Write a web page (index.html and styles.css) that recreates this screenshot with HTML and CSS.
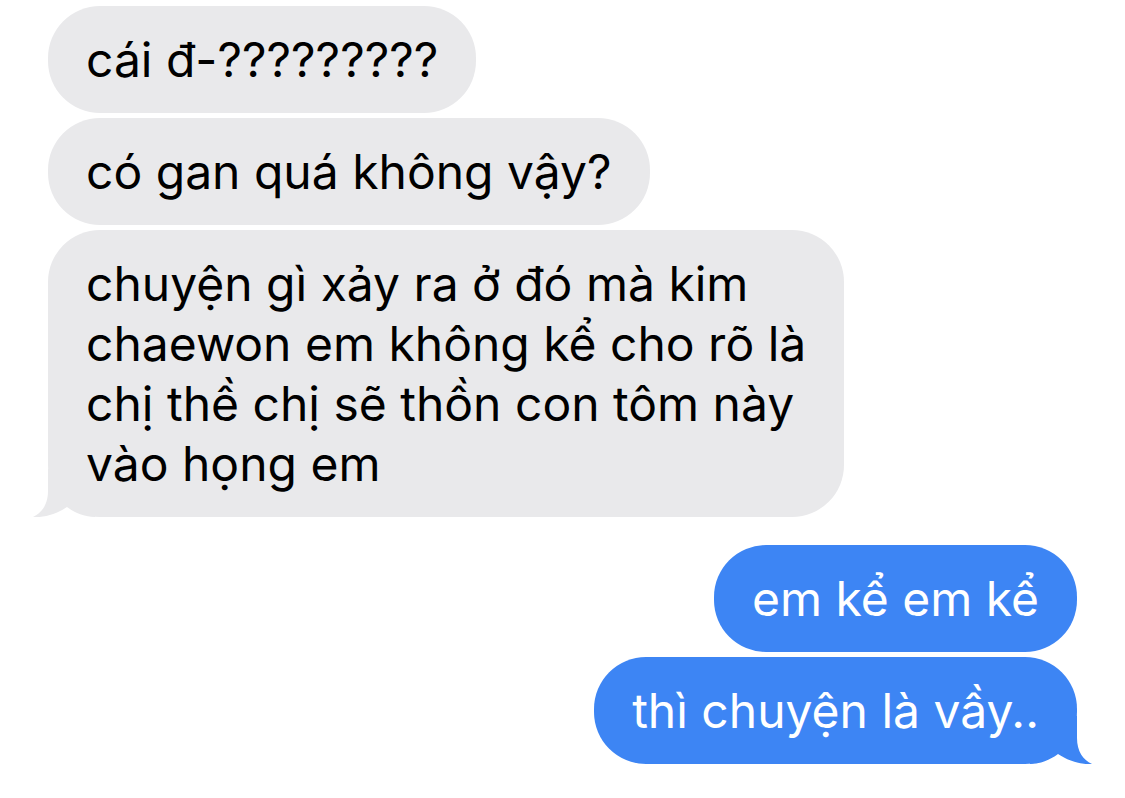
FILE: index.html
```html
<!DOCTYPE html>
<html lang="vi">
<head>
    <meta charset="UTF-8">
    <title>Tin nhắn</title>
    <link rel="stylesheet" href="styles.css">
</head>
<body>
    <div class="chat">
        <div class="group received">
            <div class="bubble">cái đ-?????????</div>
            <div class="bubble">có gan quá không vậy?</div>
            <div class="bubble tail">
                chuyện gì xảy ra ở đó mà kim<br>
                chaewon em không kể cho rõ là<br>
                chị thề chị sẽ thồn con tôm này<br>
                vào họng em
                <svg class="tail-shape" viewBox="0 0 62 48" width="62" height="48">
                    <path d="M15,0 L15,22 C15,35 9,44 0,48 C12,49 25,44 34,38 C42,44 52,48 62,48 L62,0 Z"/>
                </svg>
            </div>
        </div>

        <div class="group sent">
            <div class="bubble">em kể em kể</div>
            <div class="bubble tail">
                thì chuyện là vầy..
                <svg class="tail-shape" viewBox="0 0 62 48" width="62" height="48">
                    <path d="M15,0 L15,22 C15,35 9,44 0,48 C12,49 25,44 34,38 C42,44 52,48 62,48 L62,0 Z"/>
                </svg>
            </div>
        </div>
    </div>
</body>
</html>
```

FILE: styles.css
```css
body {
    margin: 0;
    padding: 0;
    background: #fff;
    font-family: Inter, "Noto Sans", sans-serif;
}

.chat {
    display: flex;
    flex-direction: column;
    gap: 28px;
    padding: 6px 48px;
}

.group {
    display: flex;
    flex-direction: column;
    gap: 5px;
}

.group.received {
    align-items: flex-start;
}

.group.sent {
    align-items: flex-end;
}

.bubble {
    position: relative;
    isolation: isolate;
    padding: 24px 38px 23px;
    border-radius: 52px;
    font-size: 48px;
    line-height: 60px;
    font-feature-settings: "calt" 0, "liga" 0;
    white-space: nowrap;
}

.received .bubble {
    background-color: #e9e9eb;
    color: #000;
}

.sent .bubble {
    background-color: #3d85f4;
    color: #fff;
}

/* little tail at the bottom corner of the last bubble, kept behind the text */
.tail-shape {
    position: absolute;
    bottom: 0;
    z-index: -1;
    display: block;
}

.received .tail-shape {
    left: -15px;
    fill: #e9e9eb;
}

.sent .tail-shape {
    right: -15px;
    fill: #3d85f4;
    transform: scaleX(-1);
}
```
